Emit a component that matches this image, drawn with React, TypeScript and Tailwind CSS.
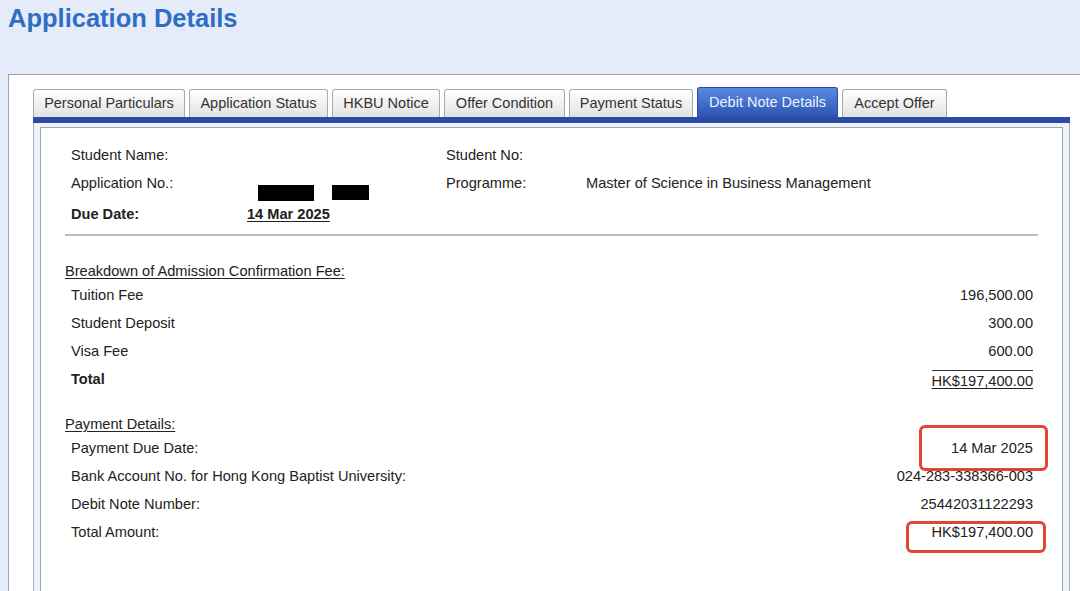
const tabs = [
  { label: "Personal Particulars", w: "w-[152px]" },
  { label: "Application Status", w: "w-[139px]" },
  { label: "HKBU Notice", w: "w-[108px]" },
  { label: "Offer Condition", w: "w-[121px]" },
  { label: "Payment Status", w: "w-[124px]" },
  { label: "Debit Note Details", w: "w-[141px]", active: true },
  { label: "Accept Offer", w: "w-[105px]" },
];

const fees = [
  { label: "Tuition Fee", value: "196,500.00" },
  { label: "Student Deposit", value: "300.00" },
  { label: "Visa Fee", value: "600.00" },
];

const App = () => {
  return (
    <div className="min-h-screen bg-[#e5ebf8] font-['Liberation_Sans',Arial,sans-serif] text-[#222]">
      {/* Title */}
      <div className="h-[74px] pl-[8px] pt-[3px]">
        <h1 className="text-[25.5px] font-bold leading-[30px] text-[#2f6ec5]">Application Details</h1>
      </div>

      {/* Outer white frame */}
      <div className="ml-[8px] border-l border-t border-[#9ea3aa] bg-white pl-[24px] pr-[10px] pt-[12px]">
        {/* Tabs */}
        <div className="flex items-end gap-[4px]">
          {tabs.map((t) =>
            t.active ? (
              <div
                key={t.label}
                className={`${t.w} flex h-[30px] items-center justify-center rounded-t-[3px] border border-b-0 border-[#2a48a4] bg-gradient-to-b from-[#5a8ae0] to-[#2d54b4] text-[14.5px] text-[#eef3ff]`}
              >
                {t.label}
              </div>
            ) : (
              <div
                key={t.label}
                className={`${t.w} flex h-[28px] items-center justify-center rounded-t-[3px] border border-b-0 border-[#aaaaaa] bg-gradient-to-b from-[#ffffff] to-[#e2e2e2] text-[14.5px] text-[#333]`}
              >
                {t.label}
              </div>
            )
          )}
        </div>
        <div className="h-[6px] bg-[#2c4ba8]" />

        {/* Tab panel */}
        <div className="border-x border-[#aab0b9] bg-[#eef2f9] px-[6px] pt-[4px]">
          <div className="border border-[#a2a6ad] bg-white pb-[60px] pl-[24px] pr-[24px] pt-[13px] text-[14.6px]">
            {/* Student info */}
            <div className="grid grid-cols-[6px_176px_199px_140px_1fr]">
              <div />
              <div className="leading-[28px]">Student Name:</div>
              <div />
              <div className="leading-[28px]">Student No:</div>
              <div />

              <div />
              <div className="leading-[28px]">Application No.:</div>
              <div className="flex items-start gap-[18px] pl-[11px] pt-[16px]">
                <div className="h-[16px] w-[56px] bg-black" />
                <div className="h-[15px] w-[37px] bg-black" />
              </div>
              <div className="leading-[28px]">Programme:</div>
              <div className="leading-[28px]">Master of Science in Business Management</div>

              <div />
              <div className="font-bold leading-[26px]">Due Date:</div>
              <div className="font-bold leading-[26px] underline underline-offset-2">14 Mar 2025</div>
              <div />
              <div />
            </div>

            <div className="mt-[7px] border-t-2 border-[#bcbcbc]" />

            {/* Breakdown */}
            <div className="mt-[24px] leading-[22px] underline underline-offset-2">
              Breakdown of Admission Confirmation Fee:
            </div>
            {fees.map((f) => (
              <div key={f.label} className="flex h-[28px] items-center justify-between pl-[6px] pr-[5px]">
                <span>{f.label}</span>
                <span>{f.value}</span>
              </div>
            ))}
            <div className="flex h-[28px] items-center justify-between pl-[6px] pr-[5px]">
              <span className="font-bold">Total</span>
              <span className="border-t border-[#333] pt-[2px] leading-[17px] underline underline-offset-2">
                HK$197,400.00
              </span>
            </div>

            {/* Payment details */}
            <div className="mt-[19px] leading-[22px] underline underline-offset-2">Payment Details:</div>
            <div className="relative flex h-[28px] items-center justify-between pl-[6px] pr-[5px]">
              <span>Payment Due Date:</span>
              <span>14 Mar 2025</span>
              <div className="absolute right-[-10px] top-[-10px] h-[46px] w-[129px] rounded-[6px] border-[3px] border-[#e2452f]" />
            </div>
            <div className="flex h-[28px] items-center justify-between pl-[6px] pr-[5px]">
              <span>Bank Account No. for Hong Kong Baptist University:</span>
              <span>024-283-338366-003</span>
            </div>
            <div className="flex h-[28px] items-center justify-between pl-[6px] pr-[5px]">
              <span>Debit Note Number:</span>
              <span>25442031122293</span>
            </div>
            <div className="relative flex h-[28px] items-center justify-between pl-[6px] pr-[5px]">
              <span>Total Amount:</span>
              <span>HK$197,400.00</span>
              <div className="absolute right-[-8px] top-[2px] h-[32px] w-[140px] rounded-[6px] border-[3px] border-[#e2452f]" />
            </div>
          </div>
        </div>
      </div>
    </div>
  );
};

export default App;
